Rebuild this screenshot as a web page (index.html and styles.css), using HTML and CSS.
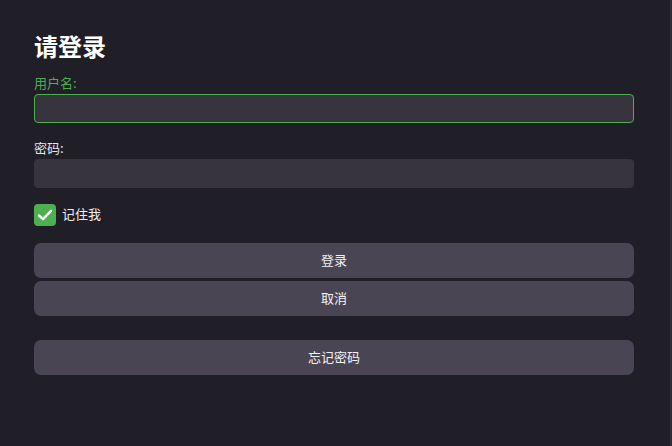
FILE: index.html
```html
<!DOCTYPE html>
<html lang="zh">
<head>
<meta charset="utf-8">
<link rel="stylesheet" href="styles.css">
</head>
<body>
<div class="page">
  <h1 class="title">请登录</h1>
  <div class="field">
    <label class="label label-active">用户名:</label>
    <div class="input input-active"></div>
  </div>
  <div class="field">
    <label class="label">密码:</label>
    <div class="input"></div>
  </div>
  <div class="remember">
    <span class="checkbox">
      <svg width="18" height="18" viewBox="0 0 18 18"><path d="M3 9.5 L7 13.2 L15 4.8" fill="none" stroke="#fff" stroke-width="2.4" stroke-linecap="round" stroke-linejoin="round"/></svg>
    </span>
    <span class="remember-text">记住我</span>
  </div>
  <div class="buttons">
    <div class="btn">登录</div>
    <div class="btn">取消</div>
  </div>
  <div class="btn btn-forgot">忘记密码</div>
</div>
</body>
</html>
```
FILE: styles.css
```css
html, body {
  margin: 0;
  padding: 0;
  height: 100%;
  background: #201e26;
}
body {
  font-family: "Noto Sans CJK SC", "Noto Sans", sans-serif;
  color: #ffffff;
  border-right: 2px solid #2e2c34;
  box-sizing: border-box;
}
.page {
  padding: 30px 36px 0 34px;
}
.title {
  margin: 0;
  font-size: 24px;
  font-weight: 700;
  line-height: 32px;
}
.field {
  margin-top: 12px;
}
.field + .field {
  margin-top: 16px;
}
.label {
  display: block;
  font-size: 13px;
  line-height: 18px;
  color: #e8e6ec;
}
.label-active {
  color: #4caf50;
}
.input {
  margin-top: 2px;
  height: 29px;
  box-sizing: border-box;
  background: #37343d;
  border: 1px solid #37343d;
  border-radius: 4px;
}
.input-active {
  border-color: #4caf50;
}
.remember {
  display: flex;
  align-items: center;
  gap: 6px;
  margin-top: 16px;
}
.checkbox {
  width: 22px;
  height: 22px;
  border-radius: 4px;
  background: #4cb050;
  display: flex;
  align-items: center;
  justify-content: center;
}
.remember-text {
  font-size: 13px;
  color: #f0eef2;
  padding-bottom: 3px;
}
.buttons {
  display: flex;
  flex-direction: column;
  gap: 3px;
  margin-top: 17px;
}
.btn {
  height: 35px;
  box-sizing: border-box;
  padding-bottom: 3px;
  background: #4a4553;
  border-radius: 7px;
  display: flex;
  align-items: center;
  justify-content: center;
  font-size: 13px;
  color: #f4f2f6;
}
.btn-forgot {
  margin-top: 24px;
}
```
